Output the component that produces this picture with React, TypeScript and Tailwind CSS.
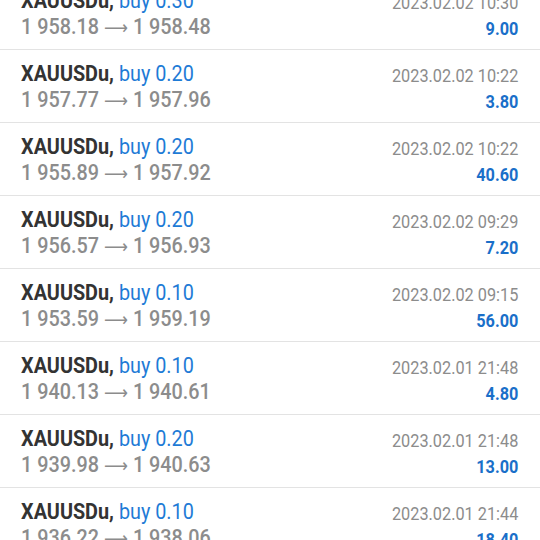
import React from "react";

const rows = [
  ["0.30", "1 958.18", "1 958.48", "2023.02.02 10:30", "9.00"],
  ["0.20", "1 957.77", "1 957.96", "2023.02.02 10:22", "3.80"],
  ["0.20", "1 955.89", "1 957.92", "2023.02.02 10:22", "40.60"],
  ["0.20", "1 956.57", "1 956.93", "2023.02.02 09:29", "7.20"],
  ["0.10", "1 953.59", "1 959.19", "2023.02.02 09:15", "56.00"],
  ["0.10", "1 940.13", "1 940.61", "2023.02.01 21:48", "4.80"],
  ["0.20", "1 939.98", "1 940.63", "2023.02.01 21:48", "13.00"],
  ["0.10", "1 936.22", "1 938.06", "2023.02.01 21:44", "18.40"],
];

export default function App() {
  return (
    <div className="w-[540px] h-[540px] overflow-hidden bg-white" style={{ fontFamily: "Roboto, sans-serif" }}>
      <div className="w-[614px] mt-[-23px] origin-top-left scale-x-[0.88]">
        {rows.map((r, i) => (
          <div key={i} className="h-[73px] border-b border-[#e3e3e3] flex justify-between pl-[24px] pr-[25px]">
            <div className="flex flex-col">
              <div className="text-[22.5px] leading-[26px] mt-[10px]">
                <span className="font-bold text-[#333333]">XAUUSDu,</span>{" "}
                <span className="text-[#1e7bd6]">buy {r[0]}</span>
              </div>
              <div className="text-[22.5px] leading-[26px] font-medium text-[#8c8c8c] whitespace-nowrap">
                {r[1]}{" "}
                <span className="font-normal text-[19px]" style={{ fontFamily: '"DejaVu Sans", sans-serif' }}>⟶</span>{" "}
                {r[2]}
              </div>
            </div>
            <div className="flex flex-col items-end">
              <div className="text-[18.5px] leading-[24px] mt-[14px] text-[#8c8c8c]">{r[3]}</div>
              <div className="text-[18.5px] leading-[24px] mt-[2px] font-bold text-[#1a6fc9]">{r[4]}</div>
            </div>
          </div>
        ))}
      </div>
    </div>
  );
}
